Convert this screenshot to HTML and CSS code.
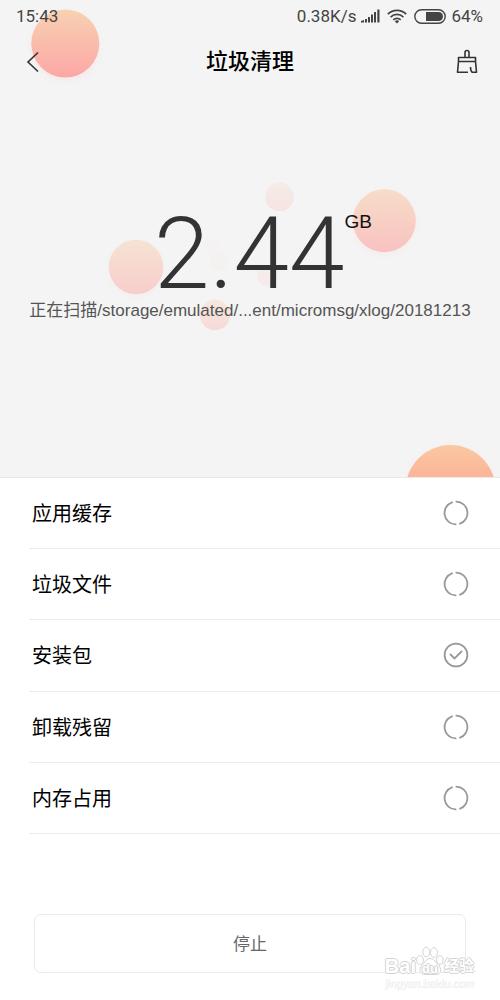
FILE: index.html
```html
<!DOCTYPE html>
<html lang="zh-CN">
<head>
<meta charset="utf-8">
<meta name="viewport" content="width=device-width, initial-scale=1">
<title>垃圾清理</title>
<link rel="stylesheet" href="styles.css">
</head>
<body>
<div class="page">
  <section class="hero">
    <svg class="bubbles" viewBox="0 0 500 477" preserveAspectRatio="xMidYMin slice" aria-hidden="true">
      <defs>
        <linearGradient id="peach" x1="0" y1="0" x2="0" y2="1">
          <stop offset="0" stop-color="#fac8a0"/>
          <stop offset="1" stop-color="#fe9290"/>
        </linearGradient>
        <filter id="shade" x="-30%" y="-30%" width="160%" height="160%">
          <feDropShadow dx="0" dy="3" stdDeviation="3" flood-color="#ff9a90" flood-opacity=".15"/>
        </filter>
      </defs>
      <g fill="url(#peach)">
        <circle cx="65.300" cy="43.500" r="34" opacity=".78" filter="url(#shade)"/>
        <circle cx="136" cy="267" r="27.300" opacity=".39" filter="url(#shade)"/>
        <circle cx="384.300" cy="220.700" r="31.500" opacity=".51" filter="url(#shade)"/>
        <circle cx="279.500" cy="196.800" r="14.300" opacity=".17"/>
        <circle cx="215" cy="315" r="15.200" opacity=".27"/>
        <circle cx="267.500" cy="275.500" r="10.500" opacity=".11"/>
        <circle cx="218.500" cy="261.500" r="9.500" opacity=".03"/>
        <circle cx="211.500" cy="247" r="9" opacity=".02"/>
        <circle cx="450.500" cy="490" r="45" filter="url(#shade)"/>
      </g>
    </svg>
    <div class="status">
      <span>15:43</span>
      <div class="status-right">
        <span>0.38K/s</span>
        <svg width="19" height="14" viewBox="0 0 19 14" fill="#444" aria-hidden="true">
          <path d="M0 13.500V12l3-1v2.500zM4 10h2v3.500H4zM7 8h2v5.500H7zM10 5.500h2v8h-2zM13 3h2v10.500h-2zM16.300.5h2.200v13h-2.200z"/>
        </svg>
        <svg class="wifi" width="20" height="15" viewBox="0 0 20 15" fill="none" stroke="#444" stroke-width="1.700" aria-hidden="true">
          <path d="M.8 5.200a13 13 0 0 1 18.400 0M3.600 8.100a9 9 0 0 1 12.800 0M6.300 10.800a5.300 5.300 0 0 1 7.400 0"/>
          <path d="M7.800 12.200a3.200 3.200 0 0 1 4.400 0L10 14.600z" fill="#444" stroke="none"/>
        </svg>
        <svg class="battery" width="32" height="15" viewBox="0 0 32 15" aria-hidden="true">
          <rect x=".8" y=".8" width="30.400" height="13.400" rx="6.700" fill="none" stroke="#444" stroke-width="1.400"/>
          <path d="M12 3h12.500a4.500 4.500 0 0 1 0 9H12z" fill="#444"/>
        </svg>
        <span>64%</span>
      </div>
    </div>
    <header class="bar">
      <button class="icon-btn back" type="button" aria-label="返回">
        <svg width="14" height="22" viewBox="0 0 14 22" fill="none" stroke="#333" stroke-width="1.600"><path d="M12 1.500 2 11l10 9.500"/></svg>
      </button>
      <h1 class="title">垃圾清理</h1>
      <button class="icon-btn" type="button" aria-label="清理设置">
        <svg width="22" height="26" viewBox="0 0 22 26" fill="none" stroke="#333" stroke-width="1.600" stroke-linejoin="round">
          <path d="M9 8.500V3.500a2 2 0 0 1 4 0v5M2.500 8.500h17v4h-17zM2.500 12.500l-1 10.800H12M19.500 12.500l1 10.800h-4.300c-1.200-.8-1.700-2.300-1.700-5.300"/>
        </svg>
      </button>
    </header>
    <div class="readout">
      <span class="amount">2.44</span><span class="unit">GB</span>
    </div>
    <p class="path">正在扫描/storage/emulated/...ent/micromsg/xlog/20181213</p>
  </section>

  <ul class="list">
    <li class="row"><span>应用缓存</span><svg class="mark" viewBox="0 0 26 26"><path d="M9 2.300A11.400 11.400 0 0 0 12.600 24.400M13.300 1.600A11.400 11.400 0 0 1 17 23.700"/></svg></li>
    <li class="row"><span>垃圾文件</span><svg class="mark" viewBox="0 0 26 26"><path d="M9 2.300A11.400 11.400 0 0 0 12.600 24.400M13.300 1.600A11.400 11.400 0 0 1 17 23.700"/></svg></li>
    <li class="row"><span>安装包</span><svg class="mark" viewBox="0 0 26 26"><circle cx="13" cy="13" r="11.400"/><path d="m7.500 12.500 4 4 7-7"/></svg></li>
    <li class="row"><span>卸载残留</span><svg class="mark" viewBox="0 0 26 26"><path d="M9 2.300A11.400 11.400 0 0 0 12.600 24.400M13.300 1.600A11.400 11.400 0 0 1 17 23.700"/></svg></li>
    <li class="row"><span>内存占用</span><svg class="mark" viewBox="0 0 26 26"><path d="M9 2.300A11.400 11.400 0 0 0 12.600 24.400M13.300 1.600A11.400 11.400 0 0 1 17 23.700"/></svg></li>
  </ul>

  <footer class="footer">
    <button class="stop" type="button">停止</button>
    <div class="watermark">
      <div class="brand">
        <span>Bai</span>
        <span class="paw">
          <svg class="paw-shape" width="28" height="30" viewBox="0 0 28 30" fill="#fff" stroke="#d4d4d4" aria-hidden="true">
            <ellipse cx="4" cy="14" rx="3.300" ry="4.300"/><ellipse cx="10.300" cy="6" rx="3.500" ry="4.800"/><ellipse cx="18" cy="6.500" rx="3.500" ry="4.800"/><ellipse cx="23.800" cy="14" rx="3.200" ry="4.300"/>
            <path d="M14 12.500c-4 0-5 4-8 7-4 4-2 9 3 9h11c5 0 6-5 3-9-3-3-5-7-9-7z"/>
          </svg>
          <span class="du">du</span>
        </span>
        <span class="cn">经验</span>
      </div>
      <div class="site">jingyan.baidu.com</div>
    </div>
  </footer>
</div>
</body>
</html>
```
FILE: styles.css
```css
* { box-sizing: border-box; }

body {
  margin: 0;
  background: #fff;
  color: #111;
  font-family: "Liberation Sans", "Noto Sans CJK SC", sans-serif;
}

button {
  padding: 0;
  border: 0;
  background: none;
  font: inherit;
  cursor: pointer;
}

.page {
  display: flex;
  flex-direction: column;
  min-height: 100vh;
}

.hero {
  position: relative;
  height: 478px;
  overflow: hidden;
  background: #f4f4f4;
  border-bottom: 1px solid #e9e9e9;
}

.bubbles {
  position: absolute;
  inset: 0;
  width: 100%;
  height: 100%;
}

.status,
.bar,
.readout,
.path { position: relative; }

.status {
  display: flex;
  justify-content: space-between;
  align-items: center;
  height: 32px;
  padding: 0 17px 0 16px;
  color: #444;
  font-family: Roboto, sans-serif;
  font-size: 17px;
}

.status-right {
  display: flex;
  align-items: center;
  gap: 5px;
}

.wifi,
.battery { margin-left: 2px; }

.bar {
  display: flex;
  align-items: center;
  justify-content: space-between;
  height: 60px;
  padding: 0 22px 0 26px;
}

.icon-btn svg { display: block; }
.back { padding-right: 4px; }

.title {
  margin: 0;
  font-size: 22px;
  line-height: 32px;
  font-weight: 500;
  color: #000;
}

.readout {
  display: flex;
  justify-content: center;
  align-items: flex-start;
  margin-top: 118px;
  padding-left: 26px;
}

.amount {
  font-family: Roboto, sans-serif;
  font-size: 100px;
  line-height: 88px;
  font-weight: 300;
  color: #333;
}

.unit {
  font-size: 19px;
  line-height: 24px;
}

.path {
  margin: 0;
  padding: 0 16px;
  text-align: center;
  font-size: 17px;
  line-height: 26px;
  color: #555;
}

.list {
  flex: 1;
  display: grid;
  grid-auto-rows: 1fr;
  margin: 0;
  padding: 0 0 0 29px;
  list-style: none;
}

.row {
  display: flex;
  align-items: center;
  justify-content: space-between;
  min-height: 56px;
  padding: 0 31px 0 3px;
  border-bottom: 1px solid #ebebeb;
  font-size: 20px;
  line-height: 30px;
  color: #000;
}

.row span { padding-top: 2px; }

.mark {
  width: 26px;
  height: 26px;
  fill: none;
  stroke: #999;
  stroke-width: 1.8;
  stroke-linecap: round;
}

.footer {
  position: relative;
  padding: 80px 34px 27px;
}

.stop {
  display: block;
  width: 100%;
  height: 59px;
  padding-bottom: 3px;
  border: 1px solid #ebebeb;
  border-radius: 7px;
  font-size: 17px;
  color: #666;
}

.watermark {
  position: absolute;
  right: 26px;
  bottom: 10px;
  color: #fff;
  pointer-events: none;
  text-shadow: 1px 0 #d4d4d4, -1px 0 #d4d4d4, 0 1px #d4d4d4, 0 -1px #d4d4d4;
}

.brand {
  display: flex;
  align-items: flex-end;
  font-size: 20px;
  font-weight: bold;
  line-height: 20px;
}

.paw {
  display: grid;
  justify-items: center;
  align-items: end;
}

.paw-shape,
.du { grid-area: 1 / 1; }

.du {
  font-size: 13px;
  line-height: 15px;
}

.cn { font-size: 15px; }

.site {
  font-size: 11px;
  line-height: 14px;
  text-shadow: 1px 0 #e8e8e8, 0 1px #e8e8e8;
}
```
